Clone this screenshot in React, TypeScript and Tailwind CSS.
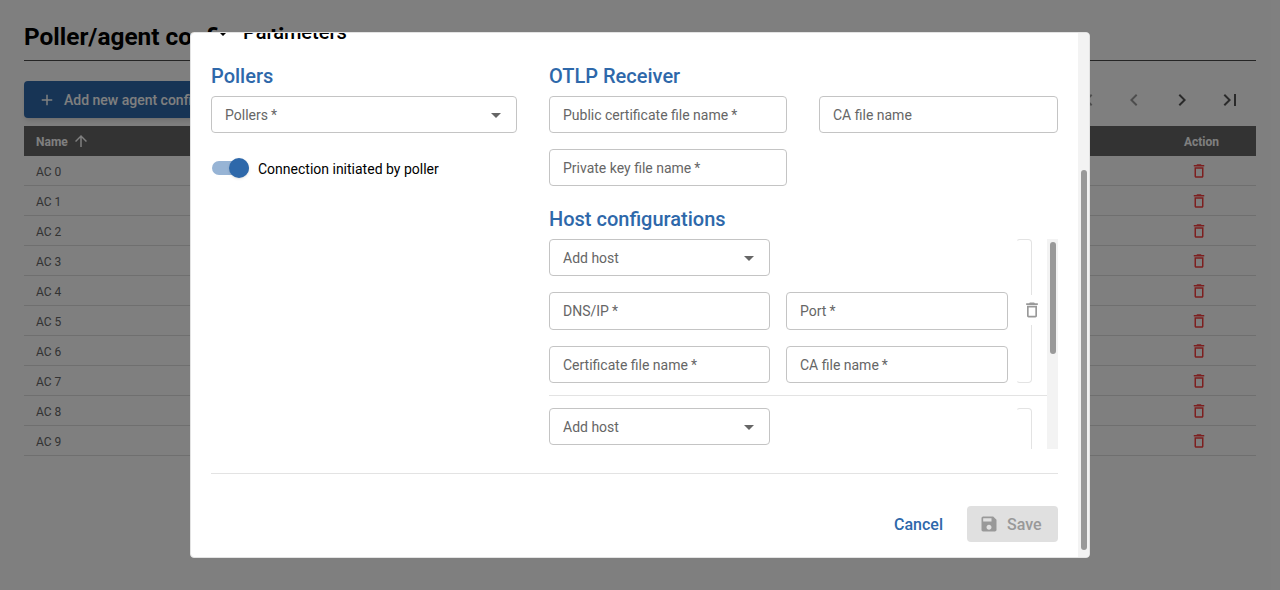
import React from "react";

type IconProps = { d: string; className?: string };

const paths = {
  add: "M19 13h-6v6h-2v-6H5v-2h6V5h2v6h6v2z",
  arrowUp: "m4 12 1.41 1.41L11 7.83V20h2V7.83l5.58 5.59L20 12l-8-8-8 8z",
  trash:
    "M6 19c0 1.1.9 2 2 2h8c1.1 0 2-.9 2-2V7H6v12zM8 9h8v10H8V9zm7.5-5-1-1h-5l-1 1H5v2h14V4z",
  first: "M18.41 16.59 13.82 12l4.59-4.59L17 6l-6 6 6 6zM6 6h2v12H6z",
  prev: "M15.41 16.59 10.83 12l4.58-4.59L14 6l-6 6 6 6z",
  next: "M8.59 16.59 13.17 12 8.59 7.41 10 6l6 6-6 6z",
  last: "M5.59 7.41 10.18 12l-4.59 4.59L7 18l6-6-6-6zM16 6h2v12h-2z",
  dropDown: "m7 10 5 5 5-5z",
  expand: "M16.59 8.59 12 13.17 7.41 8.59 6 10l6 6 6-6z",
  save: "M17 3H5c-1.11 0-2 .9-2 2v14c0 1.1.89 2 2 2h14c1.1 0 2-.9 2-2V7l-4-4zm-5 16c-1.66 0-3-1.34-3-3s1.34-3 3-3 3 1.34 3 3-1.34 3-3 3zm3-10H5V5h10v4z",
};

function Icon({ d, className = "" }: IconProps) {
  return (
    <svg viewBox="0 0 24 24" fill="currentColor" className={`shrink-0 ${className}`}>
      <path d={d} />
    </svg>
  );
}

function Field({
  label,
  required,
  select,
  className = "h-[37px]",
}: {
  label: string;
  required?: boolean;
  select?: boolean;
  className?: string;
}) {
  return (
    <div
      className={`flex items-center justify-between rounded border border-[#c4c4c4] pl-[13px] pr-2 text-sm text-[#666666] ${className}`}
    >
      <span className="whitespace-nowrap">
        {label}
        {required && <span className="ml-[3px]">*</span>}
      </span>
      {select && <Icon d={paths.dropDown} className="size-6 text-[#666666]" />}
    </div>
  );
}

function Title({ children }: { children: React.ReactNode }) {
  return (
    <h2 className="h-8 text-xl leading-6 font-medium text-[#2e68aa]">{children}</h2>
  );
}

function Host() {
  return (
    <div className="flex h-36 w-[483px] shrink-0">
      <div className="grid h-36 w-[459px] grid-cols-[221px_222px] grid-rows-[37px_38px_37px] gap-4">
        <Field label="Add host" select />
        <div />
        <Field label="DNS/IP" required className="h-[38px]" />
        <Field label="Port" required className="h-[38px]" />
        <Field label="Certificate file name" required />
        <Field label="CA file name" required />
      </div>
      <div className="relative ml-2 h-36 w-4 rounded border border-[#e3e3e3] border-l-transparent">
        <div className="absolute top-[55px] -right-[11px] flex h-[30px] w-5 items-center justify-center bg-white">
          <Icon d={paths.trash} className="size-5 text-[#999999]" />
        </div>
      </div>
    </div>
  );
}

function Page() {
  const rows = Array.from({ length: 10 }, (_, i) => `AC ${i}`);
  return (
    <main className="flex h-[590px] flex-col bg-white px-6">
      <h1 className="mt-[20px] h-10 shrink-0 text-[24.4px] leading-[34px] font-bold text-black">
        Poller/agent configurations
      </h1>
      <div className="h-px shrink-0 bg-[#4a4a4a]" />
      <div className="mt-5 flex h-[37px] shrink-0 items-center justify-between">
        <button className="flex h-[37px] items-center gap-2 rounded bg-[#2e68aa] pr-4 pl-[14px] text-sm font-medium whitespace-nowrap text-white shadow-md">
          <Icon d={paths.add} className="size-[18px]" />
          Add new agent configuration
        </button>
        <div className="mr-[14px] flex gap-6 text-[#555555]">
          <Icon d={paths.first} className="size-6 text-[#9a9a9a]" />
          <Icon d={paths.prev} className="size-6 text-[#9a9a9a]" />
          <Icon d={paths.next} className="size-6" />
          <Icon d={paths.last} className="size-6" />
        </div>
      </div>
      <div className="mt-2 flex h-[30px] shrink-0 items-center bg-[#666666] pr-[37px] pl-3 text-xs font-bold text-white">
        <span className="pt-0.5">Name</span>
        <Icon d={paths.arrowUp} className="ml-1 size-[18px]" />
        <span className="ml-auto pt-0.5">Action</span>
      </div>
      {rows.map((name) => (
        <div
          key={name}
          className="flex h-[30px] shrink-0 items-center justify-between border-b border-[#dedede] pr-12 pl-3 text-xs text-[#666666]"
        >
          <span className="pt-0.5">{name}</span>
          <Icon d={paths.trash} className="size-[18px] text-[#f93e3e]" />
        </div>
      ))}
    </main>
  );
}

function Dialog() {
  return (
    <section className="flex h-[526px] w-[900px] overflow-hidden rounded border border-[#e3e3e3] bg-white">
      <div className="flex w-[887px] flex-col px-5">
        <div className="-mt-3 flex h-6 shrink-0 items-center">
          <Icon d={paths.expand} className="mt-[-3px] size-6 text-black" />
          <span className="-mt-0.5 ml-2 text-xl leading-6 font-medium text-black">Parameters</span>
        </div>
        <div className="mt-[19px] flex h-[385px] shrink-0 gap-8">
          <div className="w-[306px]">
            <Title>Pollers</Title>
            <Field label="Pollers" required select />
            <div className="mt-[23px] ml-px flex items-center">
              <div className="flex h-[14px] w-[37px] items-center justify-end rounded-full bg-[#97b4d5]">
                <div className="size-5 rounded-full bg-[#2e68aa] shadow" />
              </div>
              <span className="ml-[9px] pt-0.5 text-sm leading-[22px] text-black">Connection initiated by poller</span>
            </div>
          </div>
          <div className="w-[509px]">
            <Title>OTLP Receiver</Title>
            <div className="grid grid-cols-[238px_239px] gap-x-8 gap-y-4">
              <Field label="Public certificate file name" required />
              <Field label="CA file name" />
              <Field label="Private key file name" required />
            </div>
            <div className="mt-[21px]">
              <Title>Host configurations</Title>
            </div>
            <div className="flex h-[210px] overflow-hidden">
              <div className="flex w-[498px] flex-col">
                <Host />
                <div className="mt-3 mb-3 h-px shrink-0 bg-[#e3e3e3]" />
                <Host />
              </div>
              <div className="w-[11px] bg-[#f3f3f3] pt-[3px] pl-[3px]">
                <div className="h-28 w-1.5 rounded-full bg-[#999999]" />
              </div>
            </div>
          </div>
        </div>
        <div className="mt-6 h-px shrink-0 bg-[#e3e3e3]" />
        <div className="mt-8 flex h-9 items-center justify-end gap-6 text-base font-medium">
          <button className="pt-0.5 text-[#2e68aa]">Cancel</button>
          <button className="flex h-9 w-[91px] items-center rounded bg-[#e0e0e0] pl-3 text-[#999999]">
            <Icon d={paths.save} className="size-5" />
            <span className="ml-2 pt-0.5">Save</span>
          </button>
        </div>
      </div>
      <div className="w-[11px] bg-[#f3f3f3] pt-[137px] pl-[3px]">
        <div className="h-[380px] w-1.5 rounded-full bg-[#999999]" />
      </div>
    </section>
  );
}

export default function App() {
  return (
    <div className="relative h-[590px] w-[1280px] overflow-hidden font-['Roboto',sans-serif]">
      <Page />
      <div className="absolute inset-0 flex items-center justify-center bg-black/50">
        <Dialog />
      </div>
    </div>
  );
}
